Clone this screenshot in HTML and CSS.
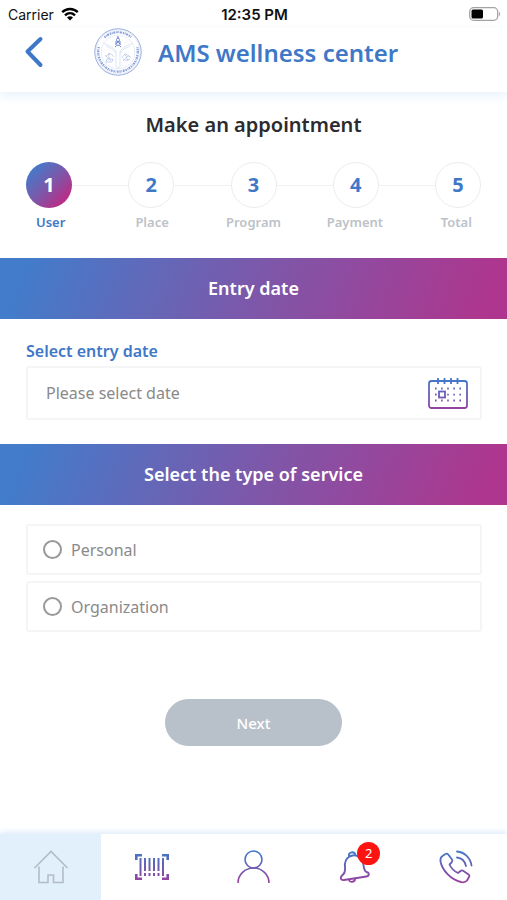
FILE: index.html
```html
<!DOCTYPE html>
<html lang="en">
<head>
    <meta charset="UTF-8">
    <meta name="viewport" content="width=device-width, initial-scale=1.0">
    <title>AMS wellness center</title>
    <link rel="stylesheet" href="styles.css">
</head>
<body>

    <!-- shared gradient for the line icons -->
    <svg class="defs" width="0" height="0" aria-hidden="true">
        <defs>
            <linearGradient id="line-gradient" gradientUnits="userSpaceOnUse" x1="0" y1="2" x2="0" y2="34">
                <stop offset="0" stop-color="#3f7acb"/>
                <stop offset="1" stop-color="#9a3f9c"/>
            </linearGradient>
        </defs>
    </svg>

    <div class="status-bar">
        <div class="carrier">
            <span>Carrier</span>
            <svg width="18" height="14" viewBox="0 0 18 14" fill="none" stroke="#000" stroke-width="2.4">
                <path d="M1.2 5.2C5.6 .9 12.4 .9 16.8 5.2"/>
                <path d="M4 8.3C6.9 5.6 11.1 5.6 14 8.3"/>
                <path d="M9 13.4L6 10.4C7.7 8.9 10.3 8.9 12 10.4Z" fill="#000" stroke="none"/>
            </svg>
        </div>
        <span class="time">12:35 PM</span>
        <svg class="battery" width="32" height="14" viewBox="0 0 32 14">
            <rect x=".7" y=".7" width="28" height="12.6" rx="4" fill="#fff" stroke="#a3a3a3" stroke-width="1.3"/>
            <rect x="2.5" y="2.5" width="11.5" height="9" rx="1.5" fill="#000"/>
            <path d="M30 4.6Q32.2 7 30 9.4Z" fill="#a3a3a3"/>
        </svg>
    </div>

    <header>
        <button class="back" type="button" aria-label="Back">
            <svg width="20" height="32" viewBox="0 0 20 32" fill="none" stroke="#4078c8" stroke-width="4" stroke-linecap="round" stroke-linejoin="round">
                <path d="M16.5 3L3.5 15.5L16.5 29"/>
            </svg>
        </button>
        <svg class="logo" width="48" height="48" viewBox="0 0 48 48" fill="none" stroke="#8ba2da">
            <circle cx="24" cy="24" r="23.2" stroke-width=".9"/>
            <circle cx="24" cy="24" r="22" stroke-width=".4" stroke="#c3cfed"/>
            <path d="M10.5 9.5A19.8 19.8 0 0 1 37.5 9.500" stroke-width="2.2" stroke-dasharray="1.5 .7 .8 .6 2 .9"/>
            <path d="M4.8 19A19.8 19.8 0 1 0 43.2 19" stroke-width="2.4" stroke-dasharray="1.4 .8 .7 .7 1.8 .8"/>
            <circle cx="24" cy="24" r="16.8" stroke-width=".4" stroke="#c3cfed"/>
            <path d="M24 8v3M22.5 11.5L24 9.5L25.5 11.5L25 13.5H23ZM21.5 17L24 13.5L26.5 17M21 19Q24 15 27 19M22 13v3M26 13v3" stroke="#6884cd" stroke-width="1"/>
            <path d="M9.5 15.5Q18 18 22 23V39Q24 41 26 39V23Q30 18 38.5 15.5M12 18Q18 20 22 25M36 18Q30 20 26 25" stroke="#bccaeb" stroke-width=".5"/>
            <path d="M12 29Q14 25 16 25.5Q19 27 20 29M13 31H19L18 34H12ZM15 25V31M11 27L17 33M28 30Q30 25 33 26.5Q34 29 37 29M29 31Q32 34 36 31M31 26L34 33M29 33L35 27" stroke="#a5b7e3" stroke-width=".6"/>
        </svg>
        <h1>AMS wellness center</h1>
    </header>

    <main>
        <h2>Make an appointment</h2>

        <div class="steps">
            <span class="step active">1</span>
            <span class="step">2</span>
            <span class="step">3</span>
            <span class="step">4</span>
            <span class="step">5</span>
        </div>
        <div class="step-labels">
            <span class="current">User</span>
            <span>Place</span>
            <span>Program</span>
            <span>Payment</span>
            <span>Total</span>
        </div>

        <form id="appointment-form">
            <h3>Entry date</h3>
            <div class="section">
                <label class="field-label" for="entry_date">Select entry date</label>
                <div class="date-field">
                    <input type="text" id="entry_date" name="entry_date" placeholder="Please select date" readonly>
                    <button type="button" aria-label="Open calendar">
                        <svg width="40" height="32" viewBox="0 0 40 32" fill="none" stroke="url(#line-gradient)" stroke-width="1.8">
                            <rect x="1" y="4" width="38" height="27" rx="2.5"/>
                            <path d="M10 1v6M16.5 1v6M23 1v6M29.5 1v6" stroke-width="1.8"/>
                            <rect x="11" y="14.5" width="6" height="6"/>
                            <path d="M7 11.5H34M7 23.5H34" stroke-dasharray="1.6 4.5"/>
                            <path d="M7 17.5H9M19.2 17.6H34" stroke-dasharray="1.6 4.5"/>
                        </svg>
                    </button>
                </div>
            </div>

            <h3>Select the type of service</h3>
            <div class="section options">
                <label class="option">
                    <input type="radio" name="service" value="personal">
                    Personal
                </label>
                <label class="option">
                    <input type="radio" name="service" value="organization">
                    Organization
                </label>
            </div>

            <button class="next" type="submit">Next</button>
        </form>
    </main>

    <nav>
        <a class="selected" href="#home" aria-label="Home">
            <svg width="36" height="36" viewBox="0 0 36 36" fill="none" stroke="#b3bdc7" stroke-width="1.6">
                <path d="M1.5 19L18 2.500L34.5 19"/>
                <path d="M6 17.500V33.500H15V26H20.5V33.500H30V17.500"/>
            </svg>
        </a>
        <a href="#scan" aria-label="Scan">
            <svg width="36" height="36" viewBox="0 0 36 36" fill="none" stroke="url(#line-gradient)" stroke-width="2.6">
                <path d="M2.3 11V6.3H8M28 6.3H33.7V11M2.3 25V29.7H8M28 29.7H33.7V25"/>
                <path d="M6.5 9V27M29 9V27" stroke-width="2"/>
                <path d="M11 9V22M15.5 9V22M20 9V22M24.5 9V22M11 24V27M15.5 24V27M20 24V27M24.5 24V27" stroke-width="2"/>
            </svg>
        </a>
        <a href="#profile" aria-label="Profile">
            <svg width="36" height="36" viewBox="0 0 36 36" fill="none" stroke="url(#line-gradient)" stroke-width="1.6">
                <circle cx="18.5" cy="10.5" r="8.5"/>
                <path d="M3 34A15.5 15 0 0 1 34 34"/>
            </svg>
        </a>
        <a href="#notifications" aria-label="Notifications">
            <svg width="36" height="36" viewBox="0 0 36 36" fill="none" stroke="url(#line-gradient)" stroke-width="1.9" stroke-linejoin="round">
                <path d="M12.5 7.500C8 10 7.5 14 8 18.500C8.5 23 7 25 5 26.500C2.500 29 4 31.500 7 31L29.5 27.500C32.5 27 32.5 23.500 29.5 23C26.5 21.500 27 17.500 26 13.500C25 9.500 21 5.500 15.5 6.500Z"/>
                <path d="M12 8C11 2.500 17.5 1.500 18.5 6.500M12 31C13 34 18 33 18 30"/>
            </svg>
            <span class="badge">2</span>
        </a>
        <a href="#call" aria-label="Call">
            <svg width="36" height="36" viewBox="0 0 36 36" fill="none" stroke="url(#line-gradient)" stroke-width="1.8" stroke-linejoin="round" stroke-linecap="round">
                <path d="M7.5 5Q9 4 10.2 5.5L14 10.5Q15 12 13.5 13.5L11.5 15.5C13 19 17 22.5 20 24L22.5 22Q24 20.8 25.5 22L30.5 25.5Q32 26.5 31 28L29 31.5Q27 34 23 33C13 31 4 21 2.5 12.5Q2 8.5 4.5 7Z"/>
                <path d="M19 2.5C26.5 3 32.5 9 33.5 16.5M19 8.5C23.5 9 27 12.5 28 17"/>
            </svg>
        </a>
    </nav>

</body>
</html>
```
FILE: styles.css
```css
* {
    margin: 0;
    padding: 0;
    box-sizing: border-box;
}
body {
    font-family: 'Noto Sans', sans-serif;
    background-color: #fff;
    color: #2b2b2f;
    min-height: 100vh;
    display: flex;
    flex-direction: column;
}
svg {
    display: block;
}
button {
    font-family: inherit;
    background: none;
    border: none;
    cursor: pointer;
}
.defs {
    position: absolute;
}
.status-bar {
    display: grid;
    grid-template-columns: 1fr auto 1fr;
    align-items: center;
    height: 28px;
    padding: 0 6px 0 8px;
    font-family: 'Inter', sans-serif;
    font-size: 14px;
    color: #111;
}
.carrier {
    display: flex;
    align-items: center;
    gap: 7px;
}
.time {
    font-size: 15px;
    font-weight: 600;
}
.battery {
    justify-self: end;
}
header {
    display: flex;
    align-items: center;
    height: 64px;
    padding: 0 24px 16px;
    box-shadow: 0 4px 10px #e8f2fc;
}
.back {
    width: 70px;
}
header h1 {
    margin-left: 16px;
    font-size: 24px;
    font-weight: 600;
    color: #4078c8;
}
h2 {
    margin-top: 18px;
    font-size: 20px;
    line-height: 30px;
    font-weight: 600;
    text-align: center;
}
.steps {
    display: flex;
    justify-content: space-between;
    margin: 22px 26px 0;
    background: linear-gradient(#f1f1f1, #f1f1f1) center / 100% 1px no-repeat;
}
.step {
    width: 46px;
    height: 46px;
    border: 1px solid #ececec;
    border-radius: 50%;
    background-color: #fff;
    color: #4078c8;
    font-size: 20px;
    font-weight: 700;
    line-height: 44px;
    text-align: center;
}
.step.active {
    border: none;
    line-height: 46px;
    background: linear-gradient(135deg, #3f7dcc 10%, #7c58aa 50%, #c4267f 90%);
    color: #fff;
}
.step-labels {
    display: grid;
    grid-template-columns: repeat(5, 1fr);
    margin: 4px 0 26px;
    font-size: 13px;
    font-weight: 600;
    line-height: 20px;
    text-align: center;
    color: #bcc2c8;
}
.step-labels .current {
    color: #4078c8;
}
h3 {
    background: linear-gradient(110deg, #427ccb 5%, #7c58aa 50%, #ae368e 95%);
    color: #fff;
    font-size: 18px;
    font-weight: 600;
    line-height: 61px;
    text-align: center;
}
.section {
    padding: 20px 25px 24px 26px;
}
.field-label {
    display: block;
    margin-bottom: 3px;
    font-size: 16px;
    font-weight: 600;
    line-height: 24px;
    color: #4078c8;
}
.date-field {
    display: flex;
    align-items: center;
    height: 54px;
    padding: 0 12px 0 18px;
    border: 2px solid #f5f5f5;
    border-radius: 3px;
}
.date-field input {
    flex: 1;
    min-width: 0;
    border: none;
    outline: none;
    background: none;
    font-family: inherit;
    font-size: 16px;
    color: #8a8a8a;
}
.date-field input::placeholder {
    color: #8a8a8a;
}
.options {
    display: grid;
    gap: 6px;
    padding-top: 19px;
}
.option {
    display: flex;
    align-items: center;
    gap: 9px;
    height: 51px;
    padding: 0 15px;
    border: 2px solid #f5f5f5;
    border-radius: 3px;
    font-size: 16px;
    color: #8a8a8a;
}
.option input {
    appearance: none;
    width: 19px;
    height: 19px;
    border: 2px solid #999;
    border-radius: 50%;
}
.option input:checked {
    border: 6px solid #4078c8;
}
.next {
    display: block;
    width: 177px;
    height: 47px;
    margin: 43px auto;
    border-radius: 24px;
    background-color: #b8c0ca;
    color: #fff;
    font-size: 15px;
    font-weight: 500;
}
nav {
    display: grid;
    grid-template-columns: repeat(5, 1fr);
    height: 66px;
    margin-top: auto;
    box-shadow: 0 -2px 6px #dcebfa;
}
nav a {
    position: relative;
    display: flex;
    align-items: center;
    justify-content: center;
}
nav .selected {
    background-color: #e2f0fb;
}
.badge {
    position: absolute;
    top: 8px;
    left: 53px;
    width: 23px;
    height: 23px;
    border-radius: 50%;
    background-color: #fb1410;
    color: #fff;
    font-size: 13px;
    line-height: 23px;
    text-align: center;
}
```
